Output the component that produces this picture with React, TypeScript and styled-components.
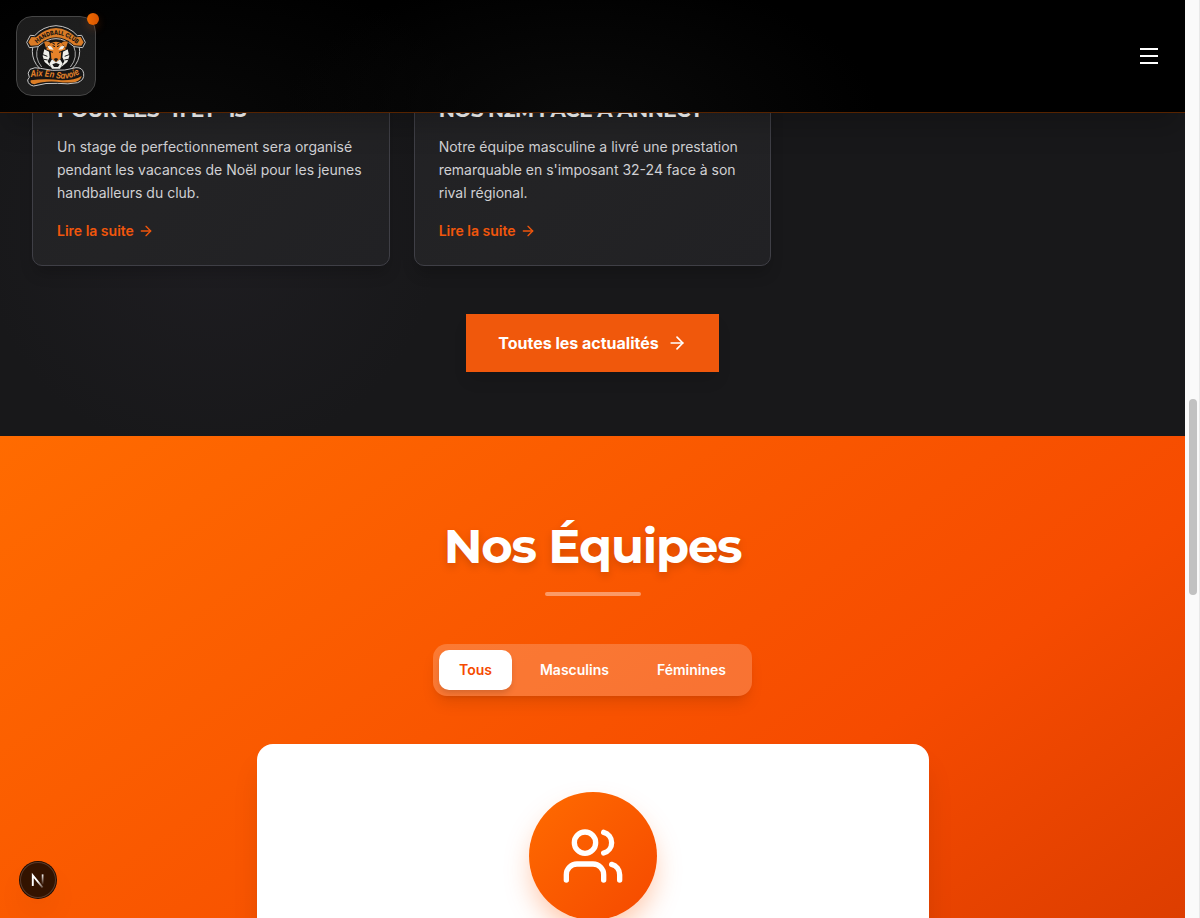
import React from 'react';
import styled, { createGlobalStyle } from 'styled-components';
import { ArrowRight, Users } from 'lucide-react';

const GlobalStyle = createGlobalStyle`
  *, *::before, *::after { box-sizing: border-box; }
  html, body { margin: 0; padding: 0; overflow: hidden; }
  body { font-family: Inter, "Liberation Sans", sans-serif; -webkit-font-smoothing: antialiased; }
  h2, h3, p { margin: 0; }
  button { font-family: inherit; border: 0; cursor: pointer; }
`;

const Window = styled.div`
  display: flex;
  height: 918px;
  overflow: hidden;
`;

const Page = styled.div`
  position: relative;
  display: flex;
  flex-direction: column;
  flex: 1;
  min-width: 0;
  overflow: hidden;
  background: #18181a;
`;

const ScrollTrack = styled.div`
  width: 15px;
  flex-shrink: 0;
  padding: 399px 3px 0 4px;
  background: #fafafa;
  border-right: 1px solid #e8e8e8;
`;

const ScrollThumb = styled.div`
  width: 8px;
  height: 196px;
  border-radius: 4px;
  background: #c1c1c1;
`;

const Header = styled.header`
  position: absolute;
  inset: 0 0 auto 0;
  z-index: 10;
  height: 113px;
  padding: 0 16px;
  display: flex;
  align-items: center;
  justify-content: space-between;
  background: radial-gradient(ellipse 300px 150px at 580px 120px, #0a0a0a, transparent),
    radial-gradient(ellipse 300px 150px at 180px 120px, #080808, transparent), #000;
  border-bottom: 1px solid #562300;
  box-shadow: 0 20px 25px -5px rgba(0, 0, 0, 0.18);
`;

const LogoTile = styled.div`
  position: relative;
  width: 80px;
  height: 80px;
  border-radius: 16px;
  border: 1px solid #464646;
  background: linear-gradient(135deg, #1c1c1c, #202020);
`;

const LogoArt = styled.svg`
  position: absolute;
  inset: -1px;
  width: 80px;
  height: 80px;
`;

const LogoDot = styled.span`
  position: absolute;
  top: -4px;
  right: -4px;
  width: 12px;
  height: 12px;
  border-radius: 50%;
  background: linear-gradient(90deg, #f06a00, #d85400);
  box-shadow: 0 4px 8px rgba(240, 90, 0, 0.22);
`;

const MenuButton = styled.button`
  display: flex;
  flex-direction: column;
  gap: 5px;
  padding: 10px;
  margin-right: 1px;
  background: transparent;
`;

const MenuBar = styled.span`
  width: 18px;
  height: 2px;
  background: #fff;
`;

const News = styled.section`
  height: 436px;
  flex-shrink: 0;
  padding: 0 32px 64px;
  display: flex;
  flex-direction: column;
  justify-content: flex-end;
  align-items: center;
  gap: 48px;
  background: radial-gradient(circle 230px at 210px 230px, #1e1d21, rgba(24, 24, 26, 0)), #18181a;
`;

const CardGrid = styled.div`
  align-self: stretch;
  display: grid;
  grid-template-columns: repeat(3, minmax(0, 1fr));
  gap: 24px;
`;

const NewsCard = styled.article`
  padding: 60px 24px 24px;
  border: 1px solid #3f3f46;
  border-radius: 10px;
  background: linear-gradient(135deg, #212124, #232325 50%, #212124);
  box-shadow: 0 10px 15px -3px rgba(0, 0, 0, 0.2);
`;

const NewsTitle = styled.h3`
  margin-bottom: 11px;
  font: 700 20px/27.5px Montserrat, Inter, sans-serif;
  letter-spacing: -0.5px;
  white-space: nowrap;
  color: #fff;
`;

const NewsText = styled.p`
  margin-bottom: 17px;
  font-size: 14px;
  line-height: 23px;
  color: #d0d0d3;
`;

const ReadMore = styled.a`
  display: flex;
  align-items: center;
  gap: 4px;
  font-size: 14px;
  font-weight: 600;
  line-height: 20px;
  color: #f0560c;
`;

const AllNews = styled.button`
  display: flex;
  align-items: center;
  gap: 8px;
  height: 58px;
  padding: 0 32px;
  background: #f0580c;
  color: #fff;
  font-size: 16px;
  font-weight: 700;
  box-shadow: 0 10px 15px -3px rgba(0, 0, 0, 0.12);
`;

const Teams = styled.section`
  flex-shrink: 0;
  height: 990px;
  padding-top: 80px;
  display: flex;
  flex-direction: column;
  align-items: center;
  background: linear-gradient(145deg, #ff6b00 0%, #f64b00 50%, #bd2c00 100%);
`;

const TeamsTitle = styled.h2`
  font: 700 48px/60px Montserrat, Inter, sans-serif;
  letter-spacing: -1.2px;
  color: #fff;
  text-shadow: 0 4px 8px rgba(0, 0, 0, 0.15);
`;

const Underline = styled.div`
  width: 96px;
  height: 4px;
  margin: 16px 0 48px;
  border-radius: 2px;
  background: rgba(255, 255, 255, 0.4);
`;

const Tabs = styled.div`
  display: flex;
  gap: 8px;
  padding: 6px;
  margin-bottom: 48px;
  border-radius: 14px;
  background: rgba(255, 255, 255, 0.2);
  box-shadow: 0 10px 15px -3px rgba(0, 0, 0, 0.1), 0 4px 6px -4px rgba(0, 0, 0, 0.1);
`;

const Tab = styled.button<{ $active?: boolean }>`
  height: 40px;
  padding: 0 20px 2px;
  border-radius: 10px;
  font-size: 14px;
  font-weight: 600;
  background: ${(p) => (p.$active ? '#fff' : 'transparent')};
  color: ${(p) => (p.$active ? '#f54a00' : '#fff')};
  box-shadow: ${(p) => (p.$active ? '0 4px 6px -1px rgba(0, 0, 0, 0.15)' : 'none')};
`;

const TeamPanel = styled.div`
  width: 672px;
  flex: 1;
  padding-top: 48px;
  display: flex;
  justify-content: center;
  align-items: flex-start;
  border-radius: 16px;
  background: #fff;
  box-shadow: 0 20px 30px -5px rgba(0, 0, 0, 0.12);
`;

const TeamBadge = styled.div`
  width: 128px;
  height: 128px;
  display: grid;
  place-items: center;
  border-radius: 50%;
  background: linear-gradient(135deg, #ff6b00, #f54900);
  color: #fff;
  box-shadow: 0 14px 28px -4px rgba(255, 90, 0, 0.36);
`;

const DevBadge = styled.div`
  position: absolute;
  left: 20px;
  top: 862px;
  width: 36px;
  height: 36px;
  border-radius: 50%;
  background: #331300;
  box-shadow: 0 0 0 1px #1b0d05, inset 0 0 0 1px #5a3a29, 0 16px 32px -8px rgba(0, 0, 0, 0.15);
`;

const articles = [
  {
    title: 'POUR LES -11 ET -15',
    text: 'Un stage de perfectionnement sera organisé pendant les vacances de Noël pour les jeunes handballeurs du club.',
  },
  {
    title: 'NOS N2M FACE À ANNECY',
    text: "Notre équipe masculine a livré une prestation remarquable en s'imposant 32-24 face à son rival régional.",
  },
];

const tabs = ['Tous', 'Masculins', 'Féminines'];

function TigerLogo() {
  return (
    <LogoArt viewBox="48 48 240 240" fill="none">
      <defs>
        <path id="club-arc" d="M111 131 Q168 78 229 131" />
        <path id="town-line" d="M92 231 Q125 226 165 234 Q205 242 241 220" />
      </defs>
      <circle cx="168" cy="154" r="71" fill="#161616" stroke="#c4c4c4" strokeWidth="3" />
      <path d="M115 138 Q101 172 125 201 M221 138 Q235 172 211 201" stroke="#aaa" strokeWidth="3" />
      <path d="M80 127 L91 106 L104 107 Q128 79 168 77 Q208 79 232 107 L245 106 L256 127 L248 143 L222 140 Q168 92 114 140 L88 143Z" fill="#161616" stroke="#c4c4c4" strokeWidth="3" />
      <path d="M85 127 L94 111 L108 112 Q133 86 168 84 Q203 86 228 112 L242 111 L251 127 L244 137 L222 136 Q168 88 114 136 L92 137Z" fill="#d97b26" />
      <text fill="#181310" fontFamily="Inter" fontWeight="800" fontSize="18">
        <textPath href="#club-arc" textLength="134" lengthAdjust="spacingAndGlyphs">HANDBALL CLUB</textPath>
      </text>
      <path d="M130 122 Q144 119 154 127 L182 127 Q192 119 206 122 L205 146 L211 168 L201 192 L183 210 L153 210 L135 192 L125 168 L131 146Z" fill="#141414" />
      <path d="M132 125 Q144 121 152 129 L138 144Z M204 125 Q192 121 184 129 L198 144Z" fill="#d97b26" />
      <path d="M151 130 Q168 121 185 130 L198 148 L184 153 L182 176 L168 186 L154 176 L152 153 L138 148Z" fill="#e68229" />
      <path d="M133 148 L147 155 L149 172 L143 184 L153 202 L134 186 L128 168Z M203 148 L189 155 L187 172 L193 184 L183 202 L202 186 L208 168Z" fill="#efefea" />
      <path d="M142 138 L153 139 L161 149 L148 148Z M194 138 L183 139 L175 149 L188 148Z" fill="#efefea" />
      <path d="M156 178 L168 187 L180 178 L188 191 L180 206 L156 206 L148 191Z" fill="#efefea" />
      <path d="M161 177 L168 174 L175 177 L168 185Z M157 193 L168 189 L179 193 L174 201 L162 201Z" fill="#181818" />
      <path d="M157 129 L165 133 M179 129 L171 133 M158 137 L165 140 M178 137 L171 140 M147 153 L159 157 M189 153 L177 157 M129 164 L142 169 M207 164 L194 169 M132 178 L143 180 M204 178 L193 180" stroke="#171717" strokeWidth="3" />
      <path d="M90 208 Q104 200 121 205 L157 211 Q196 213 228 203 Q248 202 251 220 Q254 240 233 248 Q204 254 173 250 Q139 247 101 258 Q84 255 83 240 L88 232 Q80 219 90 208Z" fill="#161616" stroke="#c8c8c8" strokeWidth="3" />
      <path d="M92 241 Q136 235 184 241 Q222 242 245 228 Q242 242 226 246 Q203 250 171 245 Q131 242 103 253 Q89 251 92 241Z" fill="#dc7d26" />
      <text fill="#e08029" fontFamily="Inter" fontStyle="italic" fontWeight="700" fontSize="27">
        <textPath href="#town-line" textLength="151" lengthAdjust="spacingAndGlyphs">Aix En Savoie</textPath>
      </text>
    </LogoArt>
  );
}

export default function App() {
  return (
    <Window>
      <GlobalStyle />
      <Page>
        <Header>
          <LogoTile>
            <TigerLogo />
            <LogoDot />
          </LogoTile>
          <MenuButton aria-label="Menu">
            <MenuBar />
            <MenuBar />
            <MenuBar />
          </MenuButton>
        </Header>
        <News>
          <CardGrid>
            {articles.map((a) => (
              <NewsCard key={a.title}>
                <NewsTitle>{a.title}</NewsTitle>
                <NewsText>{a.text}</NewsText>
                <ReadMore>
                  Lire la suite <ArrowRight size={16} />
                </ReadMore>
              </NewsCard>
            ))}
          </CardGrid>
          <AllNews>
            Toutes les actualités <ArrowRight size={20} />
          </AllNews>
        </News>
        <Teams>
          <TeamsTitle>Nos Équipes</TeamsTitle>
          <Underline />
          <Tabs>
            {tabs.map((t, i) => (
              <Tab key={t} $active={i === 0}>{t}</Tab>
            ))}
          </Tabs>
          <TeamPanel>
            <TeamBadge>
              <Users size={64} />
            </TeamBadge>
          </TeamPanel>
        </Teams>
        <DevBadge>
          <svg width="36" height="36" viewBox="0 0 36 36" fill="none">
            <defs>
              <linearGradient id="stem" x1="0" y1="12" x2="0" y2="23" gradientUnits="userSpaceOnUse">
                <stop stopColor="#fff" />
                <stop offset="1" stopColor="#fff" stopOpacity="0" />
              </linearGradient>
              <linearGradient id="diag" x1="18" y1="19" x2="23" y2="26" gradientUnits="userSpaceOnUse">
                <stop stopColor="#fff" />
                <stop offset="1" stopColor="#fff" stopOpacity="0.2" />
              </linearGradient>
            </defs>
            <path d="M12.8 24V13.4L22.6 25.5" stroke="url(#diag)" strokeWidth="1.9" />
            <path d="M22.6 12.4v10" stroke="url(#stem)" strokeWidth="1.7" />
          </svg>
        </DevBadge>
      </Page>
      <ScrollTrack>
        <ScrollThumb />
      </ScrollTrack>
    </Window>
  );
}
